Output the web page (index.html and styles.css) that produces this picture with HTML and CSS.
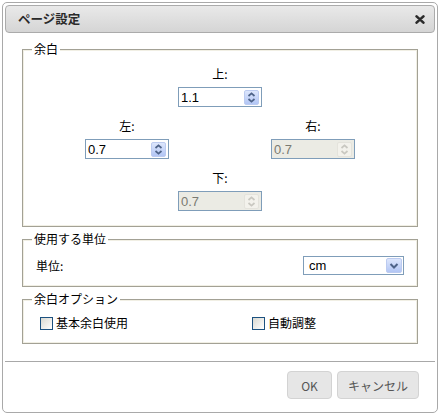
FILE: index.html
```html
<!DOCTYPE html>
<html lang="ja">
<head>
<meta charset="utf-8">
<title>ページ設定</title>
<link rel="stylesheet" href="styles.css">
</head>
<body>
<div class="dialog">
  <div class="titlebar">
    <span class="title">ページ設定</span>
    <span class="close"><svg width="10" height="9" viewBox="0 0 10 9"><path d="M1.6 1.4 L8.4 7.6 M8.4 1.4 L1.6 7.6" stroke="#2a2a2a" stroke-width="2.6" stroke-linecap="round"/></svg></span>
  </div>
  <div class="content">
    <fieldset class="group group-margins">
      <legend>余白</legend>
      <div class="margin-grid">
        <div class="field pos-top">
          <span class="field-label">上:</span>
          <div class="spin">
            <input class="spin-input" value="1.1">
            <span class="spin-btn"><svg width="13" height="13" viewBox="0 0 13 13"><path d="M3.5 5 L6.5 2.3 L9.5 5 M3.5 8 L6.5 10.7 L9.5 8" fill="none" stroke="#4e6388" stroke-width="1.7"/></svg></span>
          </div>
        </div>
        <div class="field pos-left">
          <span class="field-label">左:</span>
          <div class="spin">
            <input class="spin-input" value="0.7">
            <span class="spin-btn"><svg width="13" height="13" viewBox="0 0 13 13"><path d="M3.5 5 L6.5 2.3 L9.5 5 M3.5 8 L6.5 10.7 L9.5 8" fill="none" stroke="#4e6388" stroke-width="1.7"/></svg></span>
          </div>
        </div>
        <div class="field pos-right">
          <span class="field-label">右:</span>
          <div class="spin disabled">
            <input class="spin-input" value="0.7" disabled>
            <span class="spin-btn"><svg width="13" height="13" viewBox="0 0 13 13"><path d="M3.5 5 L6.5 2.3 L9.5 5 M3.5 8 L6.5 10.7 L9.5 8" fill="none" stroke="#c9c8c1" stroke-width="1.7"/></svg></span>
          </div>
        </div>
        <div class="field pos-bottom">
          <span class="field-label">下:</span>
          <div class="spin disabled">
            <input class="spin-input" value="0.7" disabled>
            <span class="spin-btn"><svg width="13" height="13" viewBox="0 0 13 13"><path d="M3.5 5 L6.5 2.3 L9.5 5 M3.5 8 L6.5 10.7 L9.5 8" fill="none" stroke="#c9c8c1" stroke-width="1.7"/></svg></span>
          </div>
        </div>
      </div>
    </fieldset>

    <fieldset class="group group-units">
      <legend>使用する単位</legend>
      <div class="unit-row">
        <span class="unit-label">単位:</span>
        <div class="select">
          <span class="select-value">cm</span>
          <span class="select-btn"><svg width="14" height="13" viewBox="0 0 14 13"><path d="M3.5 5 L7 8.5 L10.5 5" fill="none" stroke="#4e6388" stroke-width="2"/></svg></span>
        </div>
      </div>
    </fieldset>

    <fieldset class="group group-options">
      <legend>余白オプション</legend>
      <div class="option-row">
        <label class="check"><span class="check-box"></span>基本余白使用</label>
        <label class="check"><span class="check-box"></span>自動調整</label>
      </div>
    </fieldset>
  </div>
  <div class="footer">
    <button class="btn btn-ok">OK</button>
    <button class="btn btn-cancel">キャンセル</button>
  </div>
</div>
</body>
</html>
```

FILE: styles.css
```css
html, body {
  margin: 0;
  background: #ffffff;
}

body {
  font-family: "Noto Sans CJK JP", "Noto Sans", sans-serif;
  font-size: 12px;
  color: #000;
}

.dialog {
  margin: 2px 0 0 2px;
  width: 436px;
  height: 411px;
  box-sizing: border-box;
  border: 1px solid #a9a9a9;
  border-radius: 5px;
  padding: 2px;
  display: flex;
  flex-direction: column;
  background: #fff;
}

.titlebar {
  height: 28px;
  box-sizing: border-box;
  border: 1px solid #ababab;
  border-radius: 4px;
  background: linear-gradient(#e9e9e9, #d5d5d5);
  display: flex;
  align-items: center;
  justify-content: space-between;
  padding: 0 9px 0 12px;
}

.title {
  font-weight: bold;
  font-size: 12.5px;
  line-height: 14px;
  color: #2a2a2a;
}

.close {
  display: flex;
  width: 10px;
  height: 9px;
}

.content {
  padding: 9px 17px 17px;
}

.group {
  margin: 0 0 5px;
  min-width: 0;
  border: 1px solid #a3a195;
  box-shadow: inset 0 0 0 1px #f1efe4;
  padding: 0 9px;
}

.group-options {
  margin-bottom: 0;
}

.group legend {
  padding: 0 2px;
  line-height: 14px;
  background: #fff;
}

.group-margins {
  padding-top: 11px;
  padding-bottom: 15px;
}

.margin-grid {
  display: grid;
  grid-template-columns: repeat(3, 84px);
  column-gap: 9px;
  row-gap: 12px;
  justify-content: center;
}

.field {
  display: flex;
  flex-direction: column;
  align-items: center;
}

.pos-top { grid-column: 2; grid-row: 1; }
.pos-left { grid-column: 1; grid-row: 2; }
.pos-right { grid-column: 3; grid-row: 2; }
.pos-bottom { grid-column: 2; grid-row: 3; }

.field-label {
  line-height: 14px;
  margin-bottom: 6px;
}

.spin {
  width: 84px;
  height: 20px;
  box-sizing: border-box;
  border: 1px solid #7f9db9;
  background: #fff;
  display: flex;
  align-items: center;
}

.spin-input {
  flex: 1;
  min-width: 0;
  border: none;
  outline: none;
  background: transparent;
  padding: 0 0 0 2px;
  margin: 0;
  font-family: "Liberation Sans", Arial, sans-serif;
  font-size: 13px;
  color: #000;
  height: 18px;
}

.spin-btn {
  width: 15px;
  height: 15px;
  margin-right: 2px;
  box-sizing: border-box;
  border: 1px solid #bccbf0;
  border-radius: 2px;
  background: linear-gradient(#dde6fc, #b2c6f5);
  display: flex;
  align-items: center;
  justify-content: center;
}

.spin.disabled {
  background: #ebebe4;
}

.spin.disabled .spin-input {
  color: #7a7a72;
  -webkit-text-fill-color: #7a7a72;
}

.spin.disabled .spin-btn {
  border-color: #e4e3dc;
  background: #f3f2ec;
}

.group-units {
  padding-top: 10px;
  padding-bottom: 11px;
}

.unit-row {
  display: flex;
  align-items: center;
  justify-content: space-between;
  padding: 0 4px 0 4px;
}

.unit-label {
  line-height: 14px;
}

.select {
  width: 101px;
  height: 19px;
  box-sizing: border-box;
  border: 1px solid #7f9db9;
  background: #fff;
  display: flex;
  align-items: center;
  justify-content: space-between;
}

.select-value {
  font-family: "Liberation Sans", Arial, sans-serif;
  font-size: 13px;
  padding-left: 5px;
  line-height: 15px;
}

.select-btn {
  width: 16px;
  height: 15px;
  margin-right: 1px;
  box-sizing: border-box;
  border: 1px solid #bccbf0;
  border-radius: 2px;
  background: linear-gradient(#dde6fc, #b2c6f5);
  display: flex;
  align-items: center;
  justify-content: center;
}

.group-options {
  padding-top: 9px;
  padding-bottom: 12px;
}

.option-row {
  display: grid;
  grid-template-columns: 212px auto;
  padding-left: 8px;
}

.check {
  display: flex;
  align-items: center;
  gap: 3px;
  height: 16px;
  line-height: 16px;
}

.check-box {
  width: 13px;
  height: 13px;
  box-sizing: border-box;
  border: 1px solid #1c5180;
  background: linear-gradient(135deg, #d9d9d2, #ffffff);
}

.footer {
  margin-top: auto;
  border-top: 1px solid #a8a8a8;
  height: 49px;
  box-sizing: border-box;
  display: flex;
  justify-content: flex-end;
  align-items: flex-start;
  gap: 5px;
  padding: 9px 16px 0 0;
}

.btn {
  height: 28px;
  box-sizing: border-box;
  border: 1px solid #d3d3d3;
  border-radius: 4px;
  background: #e6e6e6;
  color: #555;
  font-family: "Noto Sans CJK JP", "Noto Sans", sans-serif;
  font-size: 12px;
  padding: 0;
  text-align: center;
}

.btn-ok {
  width: 45px;
}

.btn-cancel {
  width: 82px;
}
```
